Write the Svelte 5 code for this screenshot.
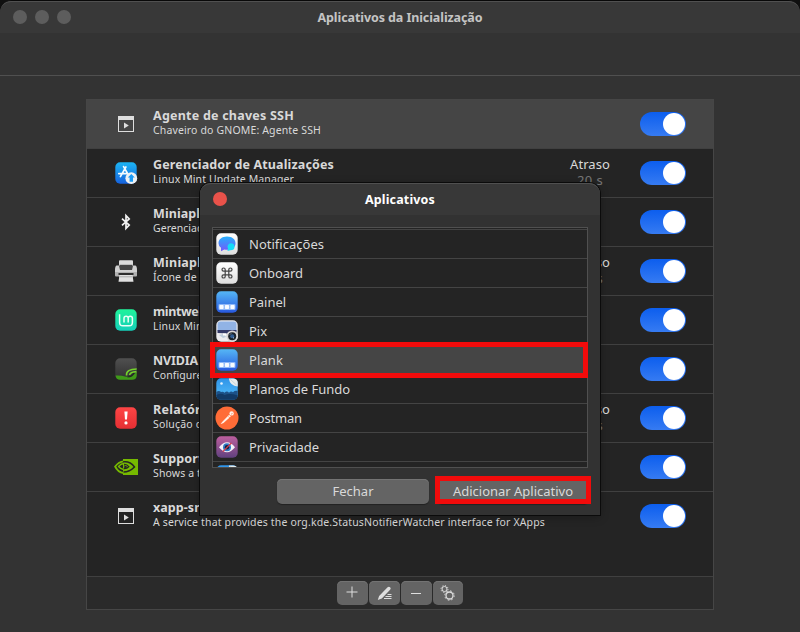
<script>
  const startup = [
    { icon: 'window', title: 'Agente de chaves SSH', sub: 'Chaveiro do GNOME: Agente SSH', tw: 141, sw: 168, selected: true },
    { icon: 'update', title: 'Gerenciador de Atualizações', sub: 'Linux Mint Update Manager', tw: 181, sw: 141, delay: '20 s' },
    { icon: 'bluetooth', title: 'Miniaplicativo Blueman', sub: 'Gerenciador Bluetooth do Blueman', tw: 149, sw: 176 },
    { icon: 'printer', title: 'Miniaplicativo da Impressora', sub: 'Ícone de notificação para impressão', tw: 188, sw: 184, delay: '30 s' },
    { icon: 'mint', title: 'mintwelcome', sub: 'Linux Mint Welcome Screen', tw: 81, sw: 140 },
    { icon: 'prime', title: 'NVIDIA Prime', sub: 'Configure NVIDIA Prime', tw: 84, sw: 121 },
    { icon: 'report', title: 'Relatórios do Sistema', sub: 'Solução de problemas do sistema', tw: 142, sw: 171, delay: '60 s' },
    { icon: 'nvidia', title: 'Support for NVIDIA Prime', sub: 'Shows a tray icon for hybrid graphics', tw: 163, sw: 187 },
    { icon: 'window', title: 'xapp-sn-watcher', sub: 'A service that provides the org.kde.StatusNotifierWatcher interface for XApps', tw: 105, sw: 392 }
  ];

  const apps = [
    { icon: 'messages', name: 'Notificações', w: 75 },
    { icon: 'onboard', name: 'Onboard', w: 54 },
    { icon: 'dock', name: 'Painel', w: 37 },
    { icon: 'pix', name: 'Pix', w: 18 },
    { icon: 'dock', name: 'Plank', w: 34, selected: true },
    { icon: 'wallpaper', name: 'Planos de Fundo', w: 101 },
    { icon: 'postman', name: 'Postman', w: 53 },
    { icon: 'privacy', name: 'Privacidade', w: 70 },
    { icon: 'wallpaper', name: '' }
  ];

  // Spreads the tracking of a label so that it takes a given width.
  function fit(node, width) {
    if (!node.textContent) return;
    const natural = node.getBoundingClientRect().width;
    const gaps = node.textContent.length;
    node.style.letterSpacing = `${(width - natural) / gaps}px`;
  }
</script>

{#snippet tile(fill)}
  <rect x="0.3" y="0.3" width="21.4" height="21.4" rx="4.8" {fill} />
{/snippet}

{#snippet icon(name)}
  <svg class="icon" viewBox="0 0 22 22">
    {#if name === 'window'}
      <path d="M3 3h16v16H3z M4 7v11h14V7z" fill="#dedede" fill-rule="evenodd" />
      <path d="M9 9.4v6.2l4.8-3.1z" fill="#dedede" />
    {:else if name === 'update'}
      {@render tile('url(#g-update)')}
      <path d="M8.6 4.6l5.4 9.4M10.9 5L5.4 14.6M3.8 11.6h9" stroke="#f4fbff" stroke-width="1.7" stroke-linecap="round" fill="none" />
      <circle cx="16.3" cy="16.2" r="5.9" fill="#eef1f4" />
      <path d="M16.3 12l3.5 3.6h-1.8v4.2h-3.4v-4.2h-1.8z" fill="#1a9af5" />
    {:else if name === 'bluetooth'}
      <path d="M7 7.6l7.2 6.5-3.2 3.3V4.6l3.2 3.3L7 14.4" fill="none" stroke="#f2f2f2" stroke-width="1.7" />
    {:else if name === 'printer'}
      <rect x="4" y="0.3" width="14" height="6" rx="1" fill="#dcdcdc" />
      <rect x="4.5" y="4.8" width="13" height="5.7" fill="#454545" />
      <path d="M0 10q0-4 1.5-4.5H4l1 4.5h12l1-4.5h2.5Q22 6 22 10v3H0z" fill="#cfcfcf" />
      <path d="M0 12h22v3.5q0 1-1 1H1q-1 0-1-1z" fill="#b0b0b0" />
      <rect x="3.5" y="13" width="15" height="2" fill="#2e2e2e" />
      <path d="M4.5 15h13l1 6.7h-15z" fill="#e1e1e1" />
      <path d="M5 16.8h12" stroke="#aaa" />
    {:else if name === 'mint'}
      {@render tile('url(#g-mint)')}
      <path d="M4.6 5.2v8.3q0 3.3 3.3 3.3h6.2q3.3 0 3.3-3.3V9.3q0-2.1-2.1-2.1t-2.1 2.1v4.2M13.2 9.3q0-2.1-2.1-2.1T9 9.3v4.2" fill="none" stroke="#eafff7" stroke-width="1.5" />
    {:else if name === 'prime'}
      {@render tile('url(#g-prime)')}
      <path d="M.5 17.5q5-.5 10.500 1.200 6.500.2 10.700-5v3.500q0 4.500-4.700 4.500H5q-4 0-4.500-4.200z" fill="#3f9b18" />
      <path d="M11.5 17.500q-.5-6.500 10.200-6.500M14.500 17q.5-3 7-3.400" stroke="#74d22c" fill="none" stroke-width="1.6" />
      <path d="M12.500 19q5-.2 6.500-4" stroke="#252525" fill="none" stroke-width="1.2" />
    {:else if name === 'report'}
      {@render tile('url(#g-report)')}
      <path d="M9.4 4.6h3.2l-.6 8h-2z" fill="#fff" />
      <circle cx="11" cy="15.9" r="1.6" fill="#fff" />
    {:else if name === 'nvidia'}
      <path d="M8 3h15v16H8z" fill="#76b900" />
      <path d="M-1 10.500Q3.500 4.500 8.500 4.500v1.700Q4.500 6.600 1.200 10.500q2.800 5 7.300 5.500V18Q2 17-1 10.500z" fill="#76b900" />
      <path d="M8 6q7-1 11.500 5Q14.500 16 8.500 16" fill="none" stroke="#242424" stroke-width="1.5" />
      <path d="M3.500 10.500Q6 7.500 9 7.500q4 0 6 3.200-3 3.200-6.500 2.800-3-.5-5-3z" fill="none" stroke="#76b900" stroke-width="1.3" />
      <path d="M9 8.200q3.500.2 5 2.500-2.500 2.600-5.500 2M9 9.700l2.500 1.300-2.500 1" fill="none" stroke="#242424" stroke-width="1.1" />
    {:else if name === 'messages'}
      {@render tile('url(#g-white)')}
      <path d="M11 3.500c5 0 8.500 2.800 8.500 6.700s-3.300 6.600-8.500 6.600q-1.500 0-2.700-.3L5 18.200v-3.500q-2.500-1.700-2.500-4.500c0-3.900 3.500-6.700 8.500-6.700z" fill="url(#g-bubble)" />
      <path d="M14.800 10.300a4 3.500 0 1 1-.5 7l-2.800.7.500-2.500a3.600 3.400 0 0 1 2.800-5.200z" fill="#16dcf7" />
    {:else if name === 'onboard'}
      {@render tile('url(#g-white)')}
      <path d="M9.200 9.200h3.600v3.600H9.200zM9.200 9.200H7.600a1.600 1.600 0 1 1 1.600-1.600zM12.800 9.200V7.600a1.600 1.600 0 1 1 1.600 1.600zM12.800 12.800h1.600a1.600 1.600 0 1 1-1.600 1.600zM9.200 12.800v1.600a1.600 1.600 0 1 1-1.600-1.600z" fill="none" stroke="#444" stroke-width="1.2" />
    {:else if name === 'dock'}
      {@render tile('url(#g-dock)')}
      <rect x="2.5" y="13" width="17" height="6" rx="1" fill="#8fb8f8" />
      <rect x="3.4" y="14" width="4.2" height="4" rx=".8" fill="#f7fbff" />
      <rect x="8.9" y="14" width="4.2" height="4" rx=".8" fill="#f7fbff" />
      <rect x="14.4" y="14" width="4.2" height="4" rx=".8" fill="#f7fbff" />
    {:else if name === 'pix'}
      {@render tile('#ececf0')}
      <path d="M1.500 4.500q0-3 3-3h13q3 0 3 3V11h-19z" fill="#91b3e5" />
      <path d="M1.500 10h19v3l-8 .5-11-.5z" fill="#343a68" />
      <path d="M3 15l4-1 2 1 1 2-3 1z" fill="#bfcddc" />
      <path d="M7 13.500h3v2H7z" fill="#fff" />
      <circle cx="16.2" cy="16.2" r="5.8" fill="#d9d6d6" />
      <circle cx="16.2" cy="16.2" r="4" fill="#1c232c" />
      <circle cx="16.2" cy="16.2" r="2" fill="#315d94" />
      <path d="M14 14.500l1-1M17 17.500l1 .8" stroke="#b5cbe5" />
    {:else if name === 'wallpaper'}
      {@render tile('url(#g-sky)')}
      <path d="M.3 14q2.700-2 4.700 0 2-1 3.500.7 2.500-2.200 4.500 0 2-2 4-.5 2-2 4.700-1.200V17q0 4.700-4.700 4.700H5Q.3 21.700.3 17z" fill="#1d5288" />
      <path d="M.3 17q5.200-2.500 8.200 0 5-2 13.200.5-.5 4.200-4.700 4.200H5Q.8 21.700.3 17z" fill="#123a66" />
      <circle cx="5.5" cy="5.5" r="1.3" fill="#e4f3ff" />
      <path d="M12.800.5h4.500q4.400.5 4.400 4V8.500Q14 8 12.800.5z" fill="#e6ecec" />
      <path d="M14.500 1.500l6 5.500" stroke="#b7c8cb" stroke-width=".7" />
    {:else if name === 'postman'}
      <circle cx="11" cy="11" r="11.5" fill="#ff6c37" />
      <path d="M5.800 16.700l-1.200.4 1.500-2 7-7.300 1.700 1.700-7.300 6.400z" fill="#fff2e9" />
      <circle cx="15.6" cy="6.4" r="2.2" fill="#fff2e9" />
      <path d="M12.500 9.500l2.200 2.500M15 7.200l1.600-.8" stroke="#ff6c37" stroke-width=".7" />
    {:else if name === 'privacy'}
      {@render tile('url(#g-priv)')}
      <path d="M3 11.200q4-5 8-5t8 5q-4 5-8 5t-8-5z" fill="#f4f1f7" />
      <circle cx="11" cy="11.2" r="4" fill="#2f79c4" />
      <circle cx="11" cy="11.2" r="2.2" fill="#14233c" />
      <path d="M6.800 15.600l8.600-8.600" stroke="#d33b4b" stroke-width="1.3" />
    {/if}
  </svg>
{/snippet}

<svg class="defs" aria-hidden="true">
  <defs>
    <linearGradient id="g-update" x2="0" y2="1"><stop stop-color="#1cb5f4" /><stop offset="1" stop-color="#1662dd" /></linearGradient>
    <linearGradient id="g-mint" x2="0" y2="1"><stop stop-color="#20f39b" /><stop offset="1" stop-color="#14cfb9" /></linearGradient>
    <linearGradient id="g-prime" x2="0" y2="1"><stop stop-color="#505050" /><stop offset="1" stop-color="#303030" /></linearGradient>
    <linearGradient id="g-report" x2="0" y2="1"><stop stop-color="#ff4545" /><stop offset="1" stop-color="#e52f33" /></linearGradient>
    <linearGradient id="g-white" x2="0" y2="1"><stop stop-color="#fff" /><stop offset="1" stop-color="#dedede" /></linearGradient>
    <linearGradient id="g-bubble" x2="0" y2="1"><stop stop-color="#24b0fc" /><stop offset="1" stop-color="#7657fa" /></linearGradient>
    <linearGradient id="g-dock" x2="0" y2="1"><stop stop-color="#55b6f5" /><stop offset="1" stop-color="#2859df" /></linearGradient>
    <linearGradient id="g-sky" x2="0" y2="1"><stop stop-color="#2e93e8" /><stop offset="1" stop-color="#55c0fb" /></linearGradient>
    <linearGradient id="g-priv" x2="0" y2="1"><stop stop-color="#bd5f9f" /><stop offset="1" stop-color="#61417f" /></linearGradient>
  </defs>
</svg>

<div class="window">
  <header class="titlebar">
    <div class="dots"><i></i><i></i><i></i></div>
    <h1><span use:fit={165}>Aplicativos da Inicialização</span></h1>
  </header>
  <div class="subbar"></div>

  <main class="panel">
    <div class="rows">
      {#each startup as row}
        <div class="row" class:selected={row.selected}>
          <div class="cell-icon">{@render icon(row.icon)}</div>
          <div class="labels">
            <div class="title"><span use:fit={row.tw}>{row.title}</span></div>
            <div class="sub"><span use:fit={row.sw}>{row.sub}</span></div>
          </div>
          {#if row.delay}
            <div class="delay">
              <div><span use:fit={40}>Atraso</span></div>
              <div class="time"><span use:fit={26}>{row.delay}</span></div>
            </div>
          {/if}
          <div class="switch"><i></i></div>
        </div>
      {/each}
    </div>
    <footer class="tools">
      <button aria-label="Adicionar"><svg viewBox="0 0 16 16"><path d="M7 1.500v11M1.500 7h11" stroke="#dedede" fill="none" /></svg></button>
      <button aria-label="Editar"><svg viewBox="0 0 16 16"><path d="M.8 15l1.300-4L10.600 2.300q1.200-1.200 2.500 0t0 2.500L4.800 13.500z" fill="#dedede" /><path d="M10.500 9.500h4M8.500 11.500h6M7 13.500h7.500" stroke="#dedede" /></svg></button>
      <button aria-label="Remover"><svg viewBox="0 0 16 16"><path d="M2 8.500h10" stroke="#dedede" /></svg></button>
      <button aria-label="Executar">
        <svg viewBox="0 0 16 16" fill="none" stroke="#dedede">
          <circle cx="4.5" cy="4" r="2.5" /><circle cx="4.5" cy="4" r="3.5" stroke-dasharray="1.2 1.55" />
          <circle cx="9.5" cy="10.5" r="3.5" stroke-width="1.3" /><circle cx="9.5" cy="10.5" r="4.7" stroke-dasharray="1.7 1.99" />
        </svg>
      </button>
    </footer>
  </main>

  <section class="dialog">
    <header class="dialog-bar">
      <i class="close"></i>
      <h2><span use:fit={70}>Aplicativos</span></h2>
    </header>
    <div class="list">
      <div class="list-inner">
        {#each apps as app}
          <div class="app" class:selected={app.selected}>
            {@render icon(app.icon)}
            {#if app.name}<span use:fit={app.w}>{app.name}</span>{/if}
          </div>
        {/each}
      </div>
      <div class="mark mark-row"></div>
    </div>
    <div class="actions">
      <button class="btn"><span use:fit={41}>Fechar</span></button>
      <button class="btn"><span use:fit={120}>Adicionar Aplicativo</span><div class="mark mark-btn"></div></button>
    </div>
  </section>
</div>

<style>
  :global(body) { margin: 0; background: #101010; overflow: hidden; }
  * { box-sizing: border-box; }
  .defs { position: absolute; width: 0; height: 0; }
  .window {
    position: relative;
    height: 632px;
    padding-top: 1px;
    background: #333;
    border-radius: 12px 12px 0 0;
    overflow: hidden;
    font: 13px/16px "Noto Sans", "Open Sans", sans-serif;
    color: #d9d9d9;
    white-space: nowrap;
    display: flex;
    flex-direction: column;
    align-items: stretch;
    box-shadow: inset 0 1px #080808;
  }
  i { display: block; }
  .titlebar {
    height: 32px;
    flex: none;
    display: grid;
    grid-template-columns: 200px 1fr 200px;
    align-items: center;
    background: #383838;
    border-top: 1px solid #505050;
    border-radius: 11px 11px 0 0;
    padding-bottom: 1px;
  }
  .dots { display: flex; gap: 8px; padding-left: 13px; }
  .dots i { width: 14px; height: 14px; border-radius: 50%; background: #5d5d5d; }
  h1, h2 { margin: 0; padding-top: 2px; font-size: 12.5px; line-height: 16px; font-weight: 700; text-align: center; }
  h1 { color: #c4c4c4; }
  .subbar { height: 43px; flex: none; border-bottom: 1px solid #505050; }

  .panel {
    width: 628px;
    height: 511px;
    margin: 23px 0 0 86px;
    border: 1px solid #464646;
    background: #242424;
    display: flex;
    flex-direction: column;
  }
  .rows { flex: 1; }
  .row {
    height: 49px;
    padding-right: 27px;
    display: flex;
    align-items: center;
    border-bottom: 1px solid #404040;
  }
  .row:last-child { border-bottom-color: transparent; }
  .row.selected { background: #454545; }
  .cell-icon { width: 66px; padding-left: 28px; display: flex; }
  .icon { width: 22px; height: 22px; flex: none; overflow: visible; }
  .labels { flex: 1; width: 0; height: 34px; padding-top: 1px; }
  .title { font-weight: 700; font-size: 12.5px; }
  .sub { font-size: 10.5px; line-height: 14px; margin-top: -1px; }
  .delay { width: 50px; margin-right: 25px; text-align: center; height: 34px; }
  .delay .time { color: #777; }
  .switch {
    width: 46px;
    height: 24px;
    border-radius: 12px;
    padding: 1px;
    display: flex;
    justify-content: flex-end;
    background: linear-gradient(#0c5eee, #367bf2);
  }
  .switch i { width: 22px; height: 22px; border-radius: 50%; background: #fff; }

  .tools {
    height: 33px;
    flex: none;
    display: flex;
    gap: 1px;
    justify-content: center;
    padding-top: 4px;
    background: #2a2a2a;
    border-top: 1px solid #404040;
  }
  button { font: inherit; color: inherit; margin: 0; padding: 0; border: 0; }
  .tools button {
    width: 31px;
    height: 24px;
    display: flex;
    align-items: center;
    justify-content: center;
    border-radius: 5px;
    background: #646464;
    box-shadow: inset 0 1px #737373;
  }
  .tools button:last-child { width: 30px; }
  .tools svg { width: 16px; height: 16px; }

  .dialog {
    position: absolute;
    left: 200px;
    top: 183px;
    width: 400px;
    height: 332px;
    background: #323232;
    border-radius: 11px 11px 0 0;
    box-shadow: 0 0 0 1px #0b0b0b, 0 2px 10px rgba(0, 0, 0, .3);
    display: flex;
    flex-direction: column;
  }
  .dialog-bar {
    height: 32px;
    display: grid;
    grid-template-columns: 100px 1fr 100px;
    align-items: center;
    background: #383838;
    border-top: 1px solid #505050;
    border-radius: 11px 11px 0 0;
    padding-bottom: 1px;
  }
  .dialog-bar h2 { color: #fff; }
  .close { width: 14px; height: 14px; margin-left: 13px; border-radius: 50%; background: #e9524a; }
  .list { position: relative; width: 376px; height: 241px; margin: 12px 12px 0; }
  .list-inner { height: 100%; border: 1px solid #505050; background: #242424; overflow: hidden; padding-top: 1px; }
  .app {
    height: 29px;
    display: flex;
    align-items: center;
    gap: 11px;
    padding-left: 3px;
    border-top: 1px solid #444;
  }
  .app.selected { background: #454545; }
  .mark { position: absolute; border: 5px solid #f20b0b; }
  .mark-row { left: -2px; top: 115px; width: 378px; height: 36px; }
  .actions { display: flex; gap: 8px; padding: 11px 11px 0 77px; }
  .btn {
    position: relative;
    width: 152px;
    height: 25px;
    padding-bottom: 2px;
    border-radius: 5px;
    background: #646464;
    box-shadow: inset 0 1px #747474, 0 1px 1px #222;
  }
  .mark-btn { left: -2px; top: -3px; width: 156px; height: 28px; }
</style>
